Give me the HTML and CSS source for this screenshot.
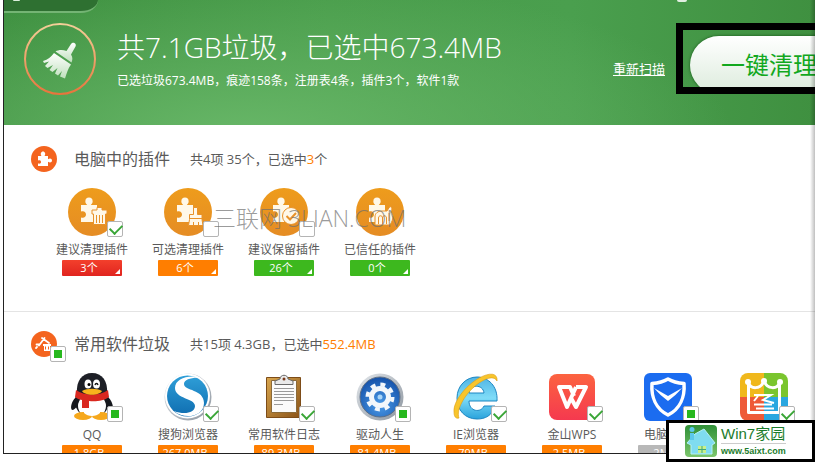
FILE: index.html
```html
<!DOCTYPE html>
<html lang="zh-CN">
<head>
    <meta charset="utf-8">
    <meta name="viewport" content="width=device-width, initial-scale=1">
    <title>电脑清理</title>
    <link rel="stylesheet" href="styles.css">
</head>
<body>
<svg class="defs" width="0" height="0" aria-hidden="true">
    <defs>
        <linearGradient id="ring" x1="0" y1="0" x2="0" y2="1">
            <stop offset="0" stop-color="#f3cf98"/><stop offset="1" stop-color="#e8743c"/>
        </linearGradient>
        <linearGradient id="silver" x1="0" y1="0" x2="0" y2="1">
            <stop offset="0" stop-color="#ffffff"/><stop offset="1" stop-color="#bfe0bd"/>
        </linearGradient>
        <linearGradient id="amber" x1="0" y1="0" x2="0" y2="1">
            <stop offset="0" stop-color="#ee9c1c"/><stop offset="1" stop-color="#e58c24"/>
        </linearGradient>
        <linearGradient id="metal" x1="0" y1="0" x2="1" y2="1">
            <stop offset="0" stop-color="#e4e8ec"/><stop offset="1" stop-color="#8b949e"/>
        </linearGradient>
        <radialGradient id="blue" cx=".5" cy=".7" r=".7">
            <stop offset="0" stop-color="#4b9be8"/><stop offset="1" stop-color="#1450a8"/>
        </radialGradient>
        <linearGradient id="sky" x1="0" y1="0" x2="0" y2="1">
            <stop offset="0" stop-color="#2f9fd8"/><stop offset="1" stop-color="#0f6db0"/>
        </linearGradient>
        <linearGradient id="ie" x1="0" y1="0" x2="0" y2="1">
            <stop offset="0" stop-color="#4fb4e4"/><stop offset=".5" stop-color="#7fdcf8"/><stop offset="1" stop-color="#2aa3dc"/>
        </linearGradient>
        <linearGradient id="wps" x1="0" y1="0" x2="0" y2="1">
            <stop offset="0" stop-color="#fc6340"/><stop offset="1" stop-color="#f5394f"/>
        </linearGradient>
        <linearGradient id="wood" x1="0" y1="0" x2="1" y2="1">
            <stop offset="0" stop-color="#d9a64e"/><stop offset="1" stop-color="#8a5318"/>
        </linearGradient>
        <linearGradient id="leaf" x1="0" y1="0" x2="0" y2="1">
            <stop offset="0" stop-color="#2f8f37"/><stop offset="1" stop-color="#7cc66c"/>
        </linearGradient>
        <symbol id="puzzle" viewBox="0 0 18 26">
            <path d="M1 8h6.200c-1.800-1.600-2-3-1.800-4a3.600 3.600 0 0 1 7.200 0c.2 1 0 2.400-1.800 4H17v17H1v-4.500c3 .9 5-.6 5-3s-2-4-5-3z"/>
        </symbol>
    </defs>
</svg>

<main class="window">
    <header class="banner">
        <span class="tab"></span>
        <span class="knob"></span>
        <svg class="broom" viewBox="0 0 72 72" aria-hidden="true">
            <circle cx="36" cy="36" r="35" fill="none" stroke="url(#ring)" stroke-width="2"/>
            <g fill="url(#silver)">
                <path d="M42.500 28l4.500-7c2-2.800 6-.5 4.500 2.500l-4.500 8c2 3 1.500 5.500.5 8L31.500 28.500c3-2 7.500-2 11-.5z"/>
                <path d="M30 30l17 11.500c-3 4-4 8-6 14l-5-2 2-5.500-4 4.500-3-2 2.500-5.500-5 4-3-2 3.500-5-5.500 3-2.500-2 4-4.500-5 1.500-1-2c5-1.500 8-4 11-8z"/>
            </g>
        </svg>
        <div class="summary">
            <h1>共7.1GB垃圾，已选中673.4MB</h1>
            <p>已选垃圾673.4MB，痕迹158条，注册表4条，插件3个，软件1款</p>
        </div>
        <a class="rescan" href="#">重新扫描</a>
        <div class="highlight">
            <button class="clean" type="button">一键清理</button>
        </div>
    </header>

    <section class="group">
        <div class="group-head">
            <span class="group-icon">
                <svg viewBox="0 0 26 26" aria-hidden="true">
                    <circle cx="13" cy="13" r="13" fill="#f4641e"/>
                    <path fill="#fff" d="M7 10h3.500C9 8 10 5.500 12 5.500s3 2.500 1.500 4.500H17v3.200c2-1.400 4-.6 4 1.300s-2 2.700-4 1.300V20H7v-2.500c2 .5 3-.2 3-1.500s-1-2-3-1.500z"/>
                </svg>
            </span>
            <h2>电脑中的插件</h2>
            <p>共4项 35个，已选中<em>3</em>个</p>
        </div>
        <ul class="tiles">
            <li>
                <div class="icon">
                    <svg viewBox="0 0 48 48" aria-hidden="true">
                        <circle cx="24" cy="24" r="24" fill="url(#amber)"/>
                        <use href="#puzzle" x="12" y="9" width="18" height="26" fill="#fff8e8"/>
                        <path fill="#fff8e8" stroke="#e8922a" d="M24 22h5v-2.500h5V22h5v4h-1.500v10.500h-12V26H24z"/>
                        <path fill="none" stroke="#e8922a" d="M28.500 27v8M31.500 27v8M34.500 27v8"/>
                    </svg>
                    <input type="checkbox" id="p1" checked>
                </div>
                <label for="p1">建议清理插件</label>
                <button class="badge red" type="button">3个</button>
            </li>
            <li>
                <div class="icon">
                    <svg viewBox="0 0 48 48" aria-hidden="true">
                        <circle cx="24" cy="24" r="24" fill="url(#amber)"/>
                        <use href="#puzzle" x="12" y="9" width="18" height="26" fill="#fff8e8"/>
                        <path fill="#fff8e8" stroke="#e8922a" d="M29.500 19.500h4v7h4.500v5l1 6H24.500l1-6v-5h4z"/>
                        <path fill="none" stroke="#e8922a" d="M26 30.500h12M29.500 34v4M34.500 34v4"/>
                    </svg>
                    <input type="checkbox" id="p2">
                </div>
                <label for="p2">可选清理插件</label>
                <button class="badge orange" type="button">6个</button>
            </li>
            <li>
                <div class="icon">
                    <svg viewBox="0 0 48 48" aria-hidden="true">
                        <circle cx="24" cy="24" r="24" fill="url(#amber)"/>
                        <use href="#puzzle" x="12" y="9" width="18" height="26" fill="#fff8e8"/>
                        <circle cx="31" cy="28" r="8.500" fill="#fff8e8" stroke="#e8922a"/>
                        <path fill="none" stroke="#e8922a" stroke-width="2" d="M26.500 28l3.500 3.500 6-6.500"/>
                    </svg>
                    <input type="checkbox" id="p3">
                </div>
                <label for="p3">建议保留插件</label>
                <button class="badge green" type="button">26个</button>
            </li>
            <li>
                <div class="icon">
                    <svg viewBox="0 0 48 48" aria-hidden="true">
                        <circle cx="24" cy="24" r="24" fill="url(#amber)"/>
                        <use href="#puzzle" x="12" y="9" width="18" height="26" fill="#fff8e8"/>
                        <path fill="#fff8e8" stroke="#e8922a" d="M19 37v-8c0-4 3-6 7-6h5l2.500-4c2-1 3 1 2 5l1.500 3c0 4-1 7-3 10z"/>
                        <path fill="none" stroke="#e8922a" d="M22.500 36v-6c0-3 4-3 4 0v6M26.500 30c0-3 4-3 4 0v6M33 25v8"/>
                    </svg>
                </div>
                <span class="name">已信任的插件</span>
                <button class="badge green" type="button">0个</button>
            </li>
        </ul>
        <span class="watermark">三联网 3LIAN.COM</span>
    </section>

    <section class="group">
        <div class="group-head">
            <span class="group-icon">
                <svg viewBox="0 0 26 26" aria-hidden="true">
                    <circle cx="13" cy="13" r="13" fill="#f4641e"/>
                    <path fill="none" stroke="#fff" stroke-width="1.800" stroke-linecap="round" d="M5 17l1-1M8 14.500L13.500 7M11 7l7 5M5.500 13.500h3"/>
                    <path fill="#fff" d="M12 13h8v2h-1v5h-6v-5h-1z"/>
                    <path stroke="#f4641e" d="M14.500 15.500v3M17.500 15.500v3"/>
                </svg>
                <input class="partial" type="checkbox" aria-labelledby="software" checked>
            </span>
            <h2 id="software">常用软件垃圾</h2>
            <p>共15项 4.3GB，已选中<em>552.4MB</em></p>
        </div>
        <ul class="tiles">
            <li>
                <div class="icon">
                    <svg viewBox="0 0 48 48" aria-hidden="true">
                        <path fill="#16181d" d="M10 22C3 28 2 35 4 37c2 0 4-2 5-4zM38 22c7 6 8 13 6 15-2 0-4-2-5-4z"/>
                        <ellipse cx="24" cy="29" rx="17" ry="16" fill="#16181d"/>
                        <ellipse cx="24" cy="33" rx="14" ry="12" fill="#fff"/>
                        <ellipse cx="15" cy="43" rx="9" ry="4" fill="#f6a81c"/>
                        <ellipse cx="33" cy="43" rx="9" ry="4" fill="#f6a81c"/>
                        <path fill="#fff" d="M16 34h16v6c-4 4-12 4-16 0z"/>
                        <path fill="#1d1f26" d="M9 20C8 8 14 0 24 0s16 8 15 20c-4 5-26 5-30 0z"/>
                        <path fill="#d9281f" d="M8 17c8 6 24 6 32 0l1 7c-5 4-14 5-20 4v7h-7v-8c-3-.5-5-1.500-7-3z"/>
                        <path fill="#f8b21c" d="M14 18c5-3 15-3 20 0-3 5-17 5-20 0z"/>
                        <ellipse cx="20" cy="11" rx="3.500" ry="4.500" fill="#fff"/>
                        <ellipse cx="28.500" cy="11" rx="3.500" ry="4.500" fill="#fff"/>
                        <circle cx="21" cy="11.500" r="1.500"/>
                        <path fill="none" stroke="#111" stroke-width="1.300" d="M27 12c.5-2 2.500-2 3 0"/>
                    </svg>
                    <input class="partial" type="checkbox" id="s1" checked>
                </div>
                <label for="s1">QQ</label>
                <button class="badge orange" type="button">1.8GB</button>
            </li>
            <li>
                <div class="icon">
                    <svg viewBox="0 0 48 48" aria-hidden="true">
                        <circle cx="24" cy="24" r="23.500" fill="url(#metal)"/>
                        <circle cx="23.500" cy="23" r="22.500" fill="#fff"/>
                        <circle cx="23.500" cy="23" r="20.500" fill="url(#sky)"/>
                        <path fill="#fff" d="M37 5C26 1 11 5 11 15c0 11 20 10 20 18 0 7-11 9-21 5 10 9 30 6 30-8 0-14-20-12-20-19 0-5 9-7 17-6z"/>
                    </svg>
                    <input type="checkbox" id="s2" checked>
                </div>
                <label for="s2">搜狗浏览器</label>
                <button class="badge orange" type="button">267.0MB</button>
            </li>
            <li>
                <div class="icon">
                    <svg viewBox="0 0 48 48" aria-hidden="true">
                        <path fill="url(#wood)" stroke="#7d4c18" d="M6.500 4.500h34v40h-34z"/>
                        <path fill="#fbfbfb" stroke="#8a6a3a" d="M11.500 7.500h25v32h-25z"/>
                        <path fill="none" stroke="#9a9a9a" d="M14 15.500h20M14 18.500h20M14 21.500h20M14 24.500h20M14 27.500h20M14 31.500h9"/>
                        <path fill="#e9e9e9" stroke="#6a6a6a" d="M15 11.500V8l5-2c0-5 8-5 8 0l5 2v3.500z"/>
                        <circle cx="24" cy="6" r="1.500" fill="#7b3b1d"/>
                    </svg>
                    <input type="checkbox" id="s3" checked>
                </div>
                <label for="s3">常用软件日志</label>
                <button class="badge orange" type="button">89.3MB</button>
            </li>
            <li>
                <div class="icon">
                    <svg viewBox="0 0 48 48" aria-hidden="true">
                        <circle cx="24" cy="24" r="23.500" fill="url(#metal)"/>
                        <circle cx="24" cy="24" r="20" fill="url(#blue)" stroke="#5d6f86"/>
                        <circle cx="24" cy="24" r="12.500" fill="none" stroke="#f3f7fb" stroke-width="4" stroke-dasharray="4.900 4.917"/>
                        <circle cx="24" cy="24" r="8.500" fill="none" stroke="#f3f7fb" stroke-width="5"/>
                        <circle cx="24" cy="24" r="2.500" fill="#a9d5f8"/>
                    </svg>
                    <input class="partial" type="checkbox" id="s4" checked>
                </div>
                <label for="s4">驱动人生</label>
                <button class="badge orange" type="button">81.4MB</button>
            </li>
            <li>
                <div class="icon">
                    <svg viewBox="0 0 48 48" aria-hidden="true">
                        <path fill="url(#ie)" stroke="#1d86c2" fill-rule="evenodd" d="M45 28H17c0 11 12 12 15 5h11C40 43 33 46 25 46 13 46 5 37 5 25S14 4 25 4s21 9 20 24zM17 20h15c-1-9-14-9-15 0z"/>
                        <path fill="#f8c52c" stroke="#dc9c14" stroke-width=".6" d="M45 8C46 0 38-1 27 5 13 13 1 29 2 39c0 5 2 7 5 6-3-8 5-22 15-31C32 5 42 2 45 8z"/>
                    </svg>
                    <input type="checkbox" id="s5" checked>
                </div>
                <label for="s5">IE浏览器</label>
                <button class="badge orange" type="button">79MB</button>
            </li>
            <li>
                <div class="icon">
                    <svg viewBox="0 0 48 48" aria-hidden="true">
                        <rect x="1" y="1" width="46" height="46" rx="8" fill="url(#wps)"/>
                        <path fill="none" stroke="#fff" stroke-width="4" stroke-linejoin="round" d="M26 23l-4-9H11l8 20 9-20M23 25l5 9 10-20H28"/>
                    </svg>
                    <input type="checkbox" id="s6" checked>
                </div>
                <label for="s6">金山WPS</label>
                <button class="badge orange" type="button">2.5MB</button>
            </li>
            <li>
                <div class="icon">
                    <svg viewBox="0 0 48 48" aria-hidden="true">
                        <rect width="48" height="48" rx="6" fill="#1b6cf0"/>
                        <path fill="none" stroke="#fff" stroke-width="3.500" stroke-linejoin="round" d="M24 6c5 3 10 4 16 4.500C41 24 36 36 24 42 12 36 7 24 8 10.500 14 10 19 9 24 6z"/>
                        <path fill="#fff" d="M10 15l14 8 14-8c-4 5-9 9-14 13-5-4-10-8-14-13z"/>
                    </svg>
                    <input class="partial" type="checkbox" id="s7" checked>
                </div>
                <label for="s7">电脑管家</label>
                <button class="badge grey" type="button">2MB</button>
            </li>
            <li>
                <div class="icon">
                    <svg viewBox="0 0 48 48" aria-hidden="true">
                        <clipPath id="tile"><rect width="48" height="48" rx="8"/></clipPath>
                        <g clip-path="url(#tile)">
                            <path fill="#f0b81c" d="M0 0h24v24H0z"/>
                            <path fill="#7ac52e" d="M24 0h24v24H24z"/>
                            <path fill="#ee5a38" d="M0 24h24v24H0z"/>
                            <path fill="#2aa7e0" d="M24 24h24v24H24z"/>
                            <path fill="none" stroke="#fff" stroke-width="3" stroke-linejoin="round" d="M8.500 39.500V10c2 6 12 7 15.500-2 3.500 9 13.500 8 15.500 2v29.500z"/>
                            <path fill="none" stroke="#fff" stroke-width="2" d="M14 22h17l-8 5 11 3M18 23l-4 5M14 31.500h18M16 35.500h18"/>
                        </g>
                        <g fill="#fff"><circle cx="8" cy="9" r="3"/><circle cx="24" cy="8" r="3"/><circle cx="40" cy="9" r="3"/></g>
                    </svg>
                    <input type="checkbox" id="s8" aria-label="美图秀秀" checked>
                </div>
            </li>
        </ul>
    </section>
</main>

<aside class="stamp">
    <svg viewBox="0 0 32 32" aria-hidden="true">
        <rect width="32" height="32" rx="4" fill="url(#leaf)"/>
        <path fill="#7fdcf0" stroke="#b5f0f8" d="M2 18L10 9l9-5 11 14-3 2v9H6v-9z"/>
        <circle cx="7" cy="4.500" r="2.500" fill="#5cc8ec"/>
        <path fill="#5cc8ec" d="M5 8h4v7H5z"/>
        <path fill="#c8f08a" d="M13 21h8v7h-8z"/>
        <path stroke="#3fa878" d="M17 21v7M13 24.500h8"/>
    </svg>
    <div class="stamp-text">
        <strong>Win7家园</strong>
        <span>www.5aixt.com</span>
    </div>
</aside>
</body>
</html>
```
FILE: styles.css
```css
:root {
    --text: #5a5a5a;
    --orange: #ff7e00;
    --green: #3db81e;
}

* {
    box-sizing: border-box;
}

html, body {
    height: 100%;
    margin: 0;
}

body {
    background: #fff;
    color: var(--text);
    font-family: "Open Sans", "Noto Sans CJK SC", sans-serif;
    font-size: 12px;
    overflow: hidden;
    position: relative;
}

h1, h2, p, ul {
    font-weight: normal;
    margin: 0;
    padding: 0;
}

em {
    color: var(--orange);
    font-style: normal;
}

button {
    border: 0;
    font-family: inherit;
    padding: 0;
}

.defs {
    position: absolute;
}

.window {
    border-bottom: 1px solid #222;
    border-left: 1px solid #222;
    height: calc(100% - 8px);
    margin-left: 3px;
    overflow: hidden;
    position: relative;
}

/* soft shadow along the right edge */
.window::after {
    background: linear-gradient(to right, transparent, rgba(0, 0, 0, 0.25));
    bottom: 0;
    content: "";
    position: absolute;
    right: 0;
    top: 0;
    width: 5px;
}

.banner {
    align-items: flex-start;
    background:
        radial-gradient(ellipse 60% 130% at 30% 110%, #68b768, rgba(104, 183, 104, 0)),
        linear-gradient(to right, #3c8e3e, #489c4a 40%, #4a9f4e 70%, #3f9040);
    color: #fff;
    display: flex;
    height: 125px;
    padding: 23px 0 0 20px;
    position: relative;
}

.tab {
    background: #2e7031;
    border-bottom: 2px solid #74b474;
    border-bottom-right-radius: 32px 24px;
    height: 13px;
    left: 0;
    position: absolute;
    top: 0;
    width: 94px;
}

.tab::before {
    background: #dcefdc;
    border-radius: 0 0 4px 4px;
    content: "";
    height: 1px;
    left: 9px;
    position: absolute;
    top: 0;
    width: 7px;
}

.knob {
    background: #e2efe2;
    border-radius: 0 0 6px 6px;
    height: 2px;
    left: 83%;
    position: absolute;
    top: 0;
    width: 10px;
}

.broom {
    flex: none;
    height: 72px;
    width: 72px;
}

.summary {
    flex: 1;
    padding: 5px 0 0 21px;
    white-space: nowrap;
}

.summary h1 {
    font-size: 28px;
    font-weight: 300;
    line-height: 38px;
}

.summary p {
    line-height: 30px;
}

.rescan {
    color: #fff;
    font-size: 13px;
    line-height: 20px;
    margin: 36px 11px 0 0;
}

.highlight {
    border: 7px solid #000;
    border-right: 0;
    flex: none;
    height: 71px;
    overflow: hidden;
    padding: 6px 0 0 7px;
    width: 139px;
}

.clean {
    background: linear-gradient(#fff, #dcebdc);
    border-radius: 29px;
    box-shadow: 0 0 3px rgba(0, 50, 0, 0.7);
    color: #12a81e;
    font-size: 24px;
    height: 58px;
    line-height: 54px;
    width: 158px;
}

.group {
    border-bottom: 1px solid #e4e4e4;
    padding: 21px 0 35px;
    position: relative;
}

.group + .group {
    border: 0;
    padding-top: 19px;
}

.group-head {
    align-items: center;
    display: flex;
    height: 26px;
    padding-left: 27px;
}

.group-icon {
    height: 26px;
    position: relative;
    width: 26px;
}

.group-icon input {
    left: 19px;
    position: absolute;
    top: 15px;
}

.group-head h2 {
    font-size: 16px;
    line-height: 26px;
    margin: 0 20px 0 17px;
}

.group-head p {
    font-size: 13px;
    line-height: 26px;
}

.tiles {
    display: flex;
    list-style: none;
    margin-top: 16px;
    padding-left: 40px;
}

.tiles li {
    align-items: center;
    display: flex;
    flex: none;
    flex-direction: column;
    width: 96px;
}

.tiles label, .tiles .name {
    line-height: 18px;
    margin: 5px 0 1px;
}

.icon {
    height: 48px;
    position: relative;
    width: 48px;
}

.icon input {
    left: 39px;
    position: absolute;
    top: 33px;
}

input[type="checkbox"] {
    appearance: none;
    background: #fff;
    border: 1px solid #b4b4b4;
    border-radius: 2px;
    height: 16px;
    margin: 0;
    width: 16px;
}

input:checked::before {
    border: solid #3aa637;
    border-width: 0 0 2px 2px;
    content: "";
    height: 6px;
    left: 2px;
    position: absolute;
    top: 2px;
    transform: rotate(-45deg);
    width: 10px;
}

input.partial:checked::before {
    background: #27b81e;
    border: 0;
    height: 8px;
    left: 3px;
    top: 3px;
    transform: none;
    width: 8px;
}

.badge {
    border-radius: 1px;
    color: #fff;
    font-size: 11px;
    height: 16px;
    line-height: 16px;
    padding-right: 6px;
    position: relative;
    width: 60px;
}

.badge::after {
    border: solid transparent;
    border-bottom-color: #fff;
    border-width: 0 0 5px 5px;
    bottom: 2px;
    content: "";
    position: absolute;
    right: 2px;
}

.red { background: linear-gradient(#f3402c, #e0241f); }
.orange { background: var(--orange); }
.green { background: var(--green); }
.grey { background: #b8b8b8; }

.watermark {
    color: rgba(110, 110, 110, 0.7);
    font-size: 23px;
    font-weight: 300;
    left: 209px;
    line-height: 30px;
    position: absolute;
    top: 78px;
    white-space: nowrap;
}

.stamp {
    align-items: center;
    background: #fff;
    border: 3px solid #000;
    bottom: 0;
    display: flex;
    gap: 4px;
    height: 42px;
    padding-left: 16px;
    position: absolute;
    right: 0;
    width: 149px;
}

.stamp svg {
    height: 32px;
    width: 32px;
}

.stamp-text {
    color: #1c7c2c;
    display: flex;
    flex-direction: column;
    font-family: "Liberation Sans", "Noto Sans CJK SC", sans-serif;
}

.stamp strong {
    border-bottom: 1px solid #ccc;
    font-size: 15px;
    font-weight: normal;
    line-height: 18px;
}

.stamp span {
    font-size: 9px;
    font-weight: bold;
    line-height: 14px;
}
```
